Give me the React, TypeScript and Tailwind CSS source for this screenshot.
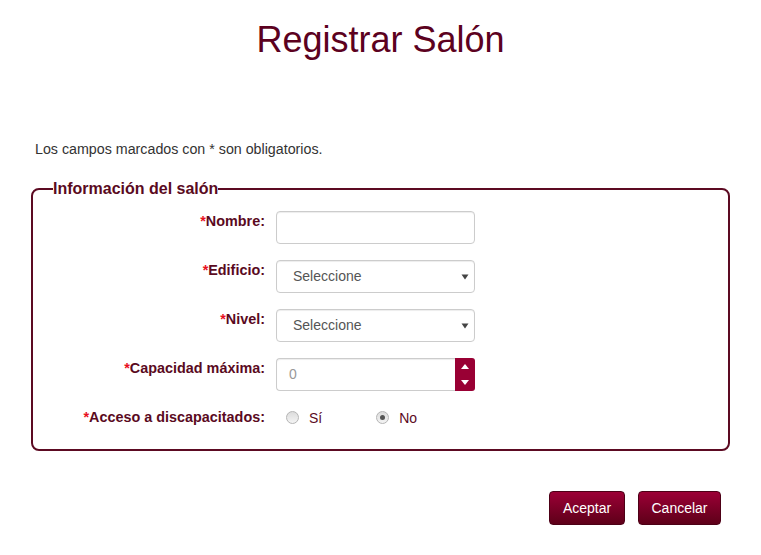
import React from "react";

const font = { fontFamily: '"Liberation Sans", Arial, sans-serif' };

function Label({ text }: { text: string }) {
  return (
    <div className="w-[212px] shrink-0 text-right text-[14.4px] font-bold leading-5 text-[#5a0a1e]">
      <span className="text-[#e8101e]">*</span>
      {text}
    </div>
  );
}

function Caret() {
  return (
    <svg width="8" height="6" viewBox="0 0 8 6" className="absolute right-[5px] top-[13px]">
      <path d="M0.5 0.5 L7.5 0.5 L4 5.5 Z" fill="#444" />
    </svg>
  );
}

function Radio({ checked }: { checked?: boolean }) {
  return (
    <span className="flex h-[13px] w-[13px] items-center justify-center rounded-full border border-[#b5b5b5] bg-gradient-to-b from-[#dcdcdc] to-[#f4f4f4]">
      {checked && <span className="h-[5px] w-[5px] rounded-full bg-[#555]" />}
    </span>
  );
}

export default function App() {
  return (
    <div className="min-h-[555px] w-[761px] bg-white text-[#333]" style={font}>
      <h1 className="pt-5 text-center text-[36px] leading-[40px] text-[#5c0120]">Registrar Salón</h1>
      <p className="ml-[35px] mt-[79px] text-[14.25px] leading-5 text-[#333]">
        Los campos marcados con * son obligatorios.
      </p>
      <fieldset className="mx-[31px] mt-[21px] rounded-[8px] border-2 border-[#5c0a22] pb-[22px] pl-[20px] pt-[13px]">
        <legend className="text-[16px] font-bold leading-[18px] text-[#5a0a1e]">Información del salón</legend>
        <div className="flex flex-col gap-4">
          <div className="flex items-start gap-[11px]">
            <Label text="Nombre:" />
            <input className="h-[33px] w-[199px] rounded-[4px] border border-[#ccc] px-3 shadow-[inset_0_1px_1px_rgba(0,0,0,0.075)] outline-none" />
          </div>
          <div className="flex items-start gap-[11px]">
            <Label text="Edificio:" />
            <div className="relative flex h-[33px] w-[199px] items-center rounded-[4px] border border-[#ccc] pl-4 text-[14px] text-[#555] shadow-[inset_0_1px_1px_rgba(0,0,0,0.075)]">
              Seleccione
              <Caret />
            </div>
          </div>
          <div className="flex items-start gap-[11px]">
            <Label text="Nivel:" />
            <div className="relative flex h-[33px] w-[199px] items-center rounded-[4px] border border-[#ccc] pl-4 text-[14px] text-[#555] shadow-[inset_0_1px_1px_rgba(0,0,0,0.075)]">
              Seleccione
              <Caret />
            </div>
          </div>
          <div className="flex items-start gap-[11px]">
            <Label text="Capacidad máxima:" />
            <div className="flex h-[33px] w-[199px]">
              <div className="flex flex-1 items-center rounded-l-[4px] border border-r-0 border-[#ccc] pl-3 text-[14px] text-[#999] shadow-[inset_0_1px_1px_rgba(0,0,0,0.075)]">
                0
              </div>
              <div className="flex w-[20px] flex-col items-center justify-between rounded-r-[3px] bg-[#990034] py-[6px]">
                <svg width="8" height="5" viewBox="0 0 8 5">
                  <path d="M0 5 L8 5 L4 0 Z" fill="#fff" />
                </svg>
                <svg width="8" height="5" viewBox="0 0 8 5">
                  <path d="M0 0 L8 0 L4 5 Z" fill="#fff" />
                </svg>
              </div>
            </div>
          </div>
          <div className="flex items-start gap-[11px]">
            <Label text="Acceso a discapacitados:" />
            <div className="flex h-5 items-center text-[14px] text-[#5a0a1e]">
              <span className="ml-[10px]"><Radio /></span>
              <span className="ml-[10px] mt-[3px]">Sí</span>
              <span className="ml-[54px]"><Radio checked /></span>
              <span className="ml-[10px] mt-[3px]">No</span>
            </div>
          </div>
        </div>
      </fieldset>
      <div className="mr-[40px] mt-[40px] flex justify-end gap-[13px]">
        <button className="h-[34px] w-[76px] rounded-[4px] border border-[#4d0016] bg-gradient-to-b from-[#9c0036] to-[#5e0019] text-[14px] text-white">
          Aceptar
        </button>
        <button className="h-[34px] w-[83px] rounded-[4px] border border-[#4d0016] bg-gradient-to-b from-[#9c0036] to-[#5e0019] text-[14px] text-white">
          Cancelar
        </button>
      </div>
    </div>
  );
}
